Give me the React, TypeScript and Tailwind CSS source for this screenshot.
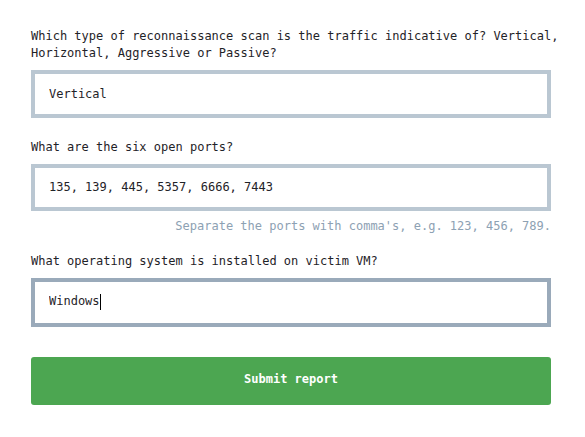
import { useState } from 'react'

const MONO = "font-['DejaVu_Sans_Mono','Liberation_Mono',monospace]"

export default function App() {
  const [scan, setScan] = useState('Vertical')
  const [ports, setPorts] = useState('135, 139, 445, 5357, 6666, 7443')
  const [os, setOs] = useState('Windows')

  return (
    <main className={`min-h-screen bg-white ${MONO} text-[12px] leading-[17px] text-[#1f2328]`}>
      <form className="w-[520px] ml-[31px] pt-[28px] flex flex-col" onSubmit={e => e.preventDefault()}>

        <label className="block w-[530px]">
          Which type of reconnaissance scan is the traffic indicative of? Vertical, Horizontal, Aggressive or Passive?
        </label>
        <input value={scan} onChange={e => setScan(e.target.value)}
          className="mt-[8px] h-[48px] w-full border-4 border-[#bac7d2] bg-white px-[14px] outline-none" />

        <label className="block mt-[21px]">What are the six open ports?</label>
        <input value={ports} onChange={e => setPorts(e.target.value)}
          className="mt-[8px] h-[47px] w-full border-4 border-[#bac7d2] bg-white px-[14px] pb-[2px] outline-none" />
        <p className="mt-[7px] text-right text-[#8da1b3]">
          Separate the ports with comma's, e.g. 123, 456, 789.
        </p>

        <label className="block mt-[18px]">What operating system is installed on victim VM?</label>
        <div className="mt-[8px] h-[49px] w-full border-4 border-[#9aaaba] bg-white px-[14px] pb-[2px] flex items-center">
          <input autoFocus value={os} onChange={e => setOs(e.target.value)}
            style={{ width: `${os.length}ch` }} className="p-0 bg-transparent outline-none caret-black" />
          <span className="w-px h-[16px] bg-black" />
        </div>

        <button type="submit"
          className="mt-[30px] h-[48px] w-full rounded-[3px] bg-[#4ca651] pb-[4px] font-bold text-white">
          Submit report
        </button>
      </form>
    </main>
  )
}
